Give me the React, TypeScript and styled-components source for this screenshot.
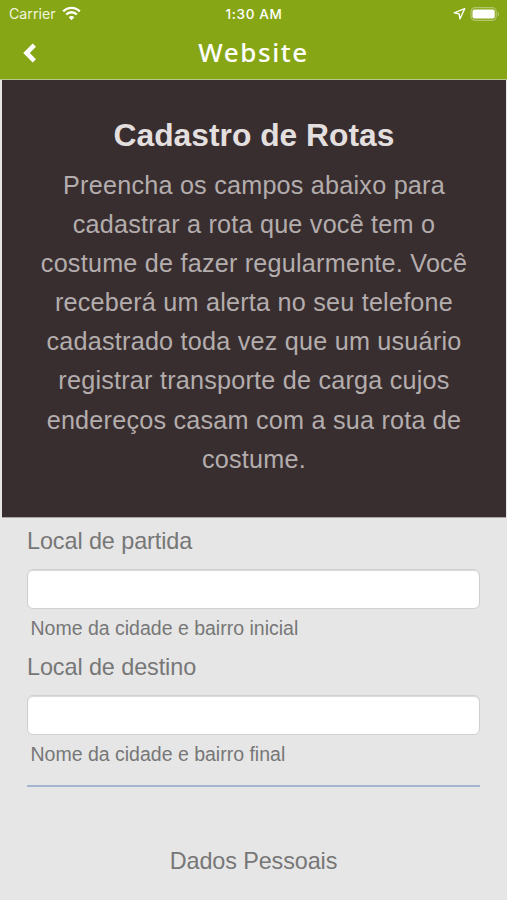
import React from "react";
import styled, { createGlobalStyle } from "styled-components";

const GlobalStyle = createGlobalStyle`
  * { box-sizing: border-box; }
  body { margin: 0; background: #e6e6e6; font-family: "Liberation Sans", Arial, sans-serif; }
`;

const Screen = styled.div`
  width: 507px;
  height: 900px;
  overflow: hidden;
  background: #e6e6e6;
`;

const Header = styled.header`
  height: 80px;
  background: #87a616;
  border-bottom: 1px solid #b9c58b;
  color: #fff;
`;

const StatusBar = styled.div`
  height: 28px;
  padding: 0 6px 0 9px;
  display: grid;
  grid-template-columns: 1fr auto 1fr;
  align-items: center;
  font-family: Inter, sans-serif;
`;

const Carrier = styled.div`
  display: flex;
  align-items: center;
  gap: 6px;
  font-size: 14.2px;
  line-height: 28px;
  color: #f0f5dc;

  svg { margin-top: -2px; }
`;

const Clock = styled.div`
  margin-left: -2px;
  font-size: 13.5px;
  font-weight: 500;
  letter-spacing: 0.65px;
  line-height: 28px;
`;

const Indicators = styled.div`
  display: flex;
  justify-content: flex-end;
  align-items: center;
  gap: 3px;

  svg { margin-top: -1px; }
`;

const NavBar = styled.nav`
  height: 51px;
  display: grid;
  grid-template-columns: 60px 1fr 60px;
  align-items: center;
`;

const BackButton = styled.button`
  width: 60px;
  height: 48px;
  margin-top: -2px;
  padding: 0 0 0 22px;
  border: 0;
  background: none;
  display: flex;
  align-items: center;
`;

const NavTitle = styled.h1`
  margin: -3px 0 0;
  font: 500 26px/50px "Noto Sans", sans-serif;
  font-synthesis: none;
  letter-spacing: 1.6px;
  text-align: center;
`;

const Intro = styled.section`
  height: 438px;
  margin: 0 1px 0 2px;
  padding-top: 36px;
  background: #392e2f;
  border-bottom: 1px solid #aaa6a6;
  text-align: center;
`;

const IntroTitle = styled.h2`
  margin: 0 0 12px;
  color: #e4dfdf;
  font-size: 31.8px;
  line-height: 38px;
`;

const IntroText = styled.p`
  margin: 0;
  color: #b3adad;
  font-size: 25.2px;
  line-height: 39.1px;
  letter-spacing: 0.22px;
`;

const Line = styled.span`
  display: block;
  white-space: nowrap;
`;

const Form = styled.form`
  padding: 8px 27px 0;
`;

const Fields = styled.div`
  height: 251px;
`;

const Field = styled.div`
  height: 126px;
`;

const Label = styled.label`
  display: block;
  height: 43px;
  color: #777;
  font-size: 23.4px;
  line-height: 30px;
  letter-spacing: -0.08px;
`;

const Input = styled.input`
  display: block;
  width: 100%;
  height: 40px;
  padding: 6px 12px;
  border: 1px solid #d0d0d0;
  border-radius: 6px;
  background: #fff;
  box-shadow: inset 0 1px 1px rgba(0, 0, 0, 0.15);
  font: inherit;
`;

const Hint = styled.div`
  padding: 7px 0 0 3.5px;
  color: #777;
  font-size: 19.5px;
  line-height: 24px;
`;

const Divider = styled.hr`
  height: 2px;
  margin: 8px 0 59px;
  border: 0;
  background: #a3b5d0;
`;

const SectionTitle = styled.h3`
  margin: 0;
  color: #777;
  font-size: 23.4px;
  font-weight: 400;
  line-height: 30px;
  letter-spacing: -0.1px;
  text-align: center;
`;

const introLines = [
  "Preencha os campos abaixo para",
  "cadastrar a rota que você tem o",
  "costume de fazer regularmente. Você",
  "receberá um alerta no seu telefone",
  "cadastrado toda vez que um usuário",
  "registrar transporte de carga cujos",
  "endereços casam com a sua rota de",
  "costume.",
];

const fields = [
  { id: "partida", label: "Local de partida", hint: "Nome da cidade e bairro inicial" },
  { id: "destino", label: "Local de destino", hint: "Nome da cidade e bairro final" },
];

const WifiIcon = () => (
  <svg width="19" height="15" viewBox="0 0 19 15" fill="none" stroke="#fff" strokeWidth="2.3">
    <path d="M1.2 5.4C5.9.6 13.1.6 17.8 5.4" />
    <path d="M4.2 8.5c3-3 7.600-3 10.600 0" />
    <path d="M6.700 11.200L9.500 14.200l2.800-3c-1.500-1.500-4.100-1.500-5.600 0z" fill="#fff" stroke="none" />
  </svg>
);

const LocationIcon = () => (
  <svg width="13" height="13" viewBox="0 0 13 13" fill="none" stroke="#fff" strokeWidth="1.400" strokeLinejoin="round">
    <path d="M11.700 1.700L1.200 5.800l4.900 1.100.900 4.900z" />
  </svg>
);

const BatteryIcon = () => (
  <svg width="32" height="14" viewBox="0 0 32 14">
    <rect x="2" y=".7" width="25.200" height="12.600" rx="4" fill="none" stroke="#b4c66d" strokeWidth="1.200" />
    <rect x="3.500" y="2.500" width="22.200" height="9" rx="2" fill="#fff" />
    <path d="M28.700 4.700c1.800.8 1.800 3.800 0 4.600z" fill="#b4c66d" />
  </svg>
);

const BackIcon = () => (
  <svg width="15" height="20" viewBox="0 0 15 20" fill="none" stroke="#fff" strokeWidth="4.600">
    <path d="M12.300 2.200L4.500 10l7.800 7.800" />
  </svg>
);

export default function App() {
  return (
    <Screen>
      <GlobalStyle />
      <Header>
        <StatusBar>
          <Carrier>Carrier <WifiIcon /></Carrier>
          <Clock>1:30 AM</Clock>
          <Indicators><LocationIcon /><BatteryIcon /></Indicators>
        </StatusBar>
        <NavBar>
          <BackButton type="button" aria-label="Voltar"><BackIcon /></BackButton>
          <NavTitle>Website</NavTitle>
        </NavBar>
      </Header>
      <Intro>
        <IntroTitle>Cadastro de Rotas</IntroTitle>
        <IntroText>
          {introLines.map((line) => <Line key={line}>{line}</Line>)}
        </IntroText>
      </Intro>
      <Form>
        <Fields>
          {fields.map(({ id, label, hint }) => (
            <Field key={id}>
              <Label htmlFor={id}>{label}</Label>
              <Input id={id} type="text" />
              <Hint>{hint}</Hint>
            </Field>
          ))}
        </Fields>
        <Divider />
        <SectionTitle>Dados Pessoais</SectionTitle>
      </Form>
    </Screen>
  );
}
